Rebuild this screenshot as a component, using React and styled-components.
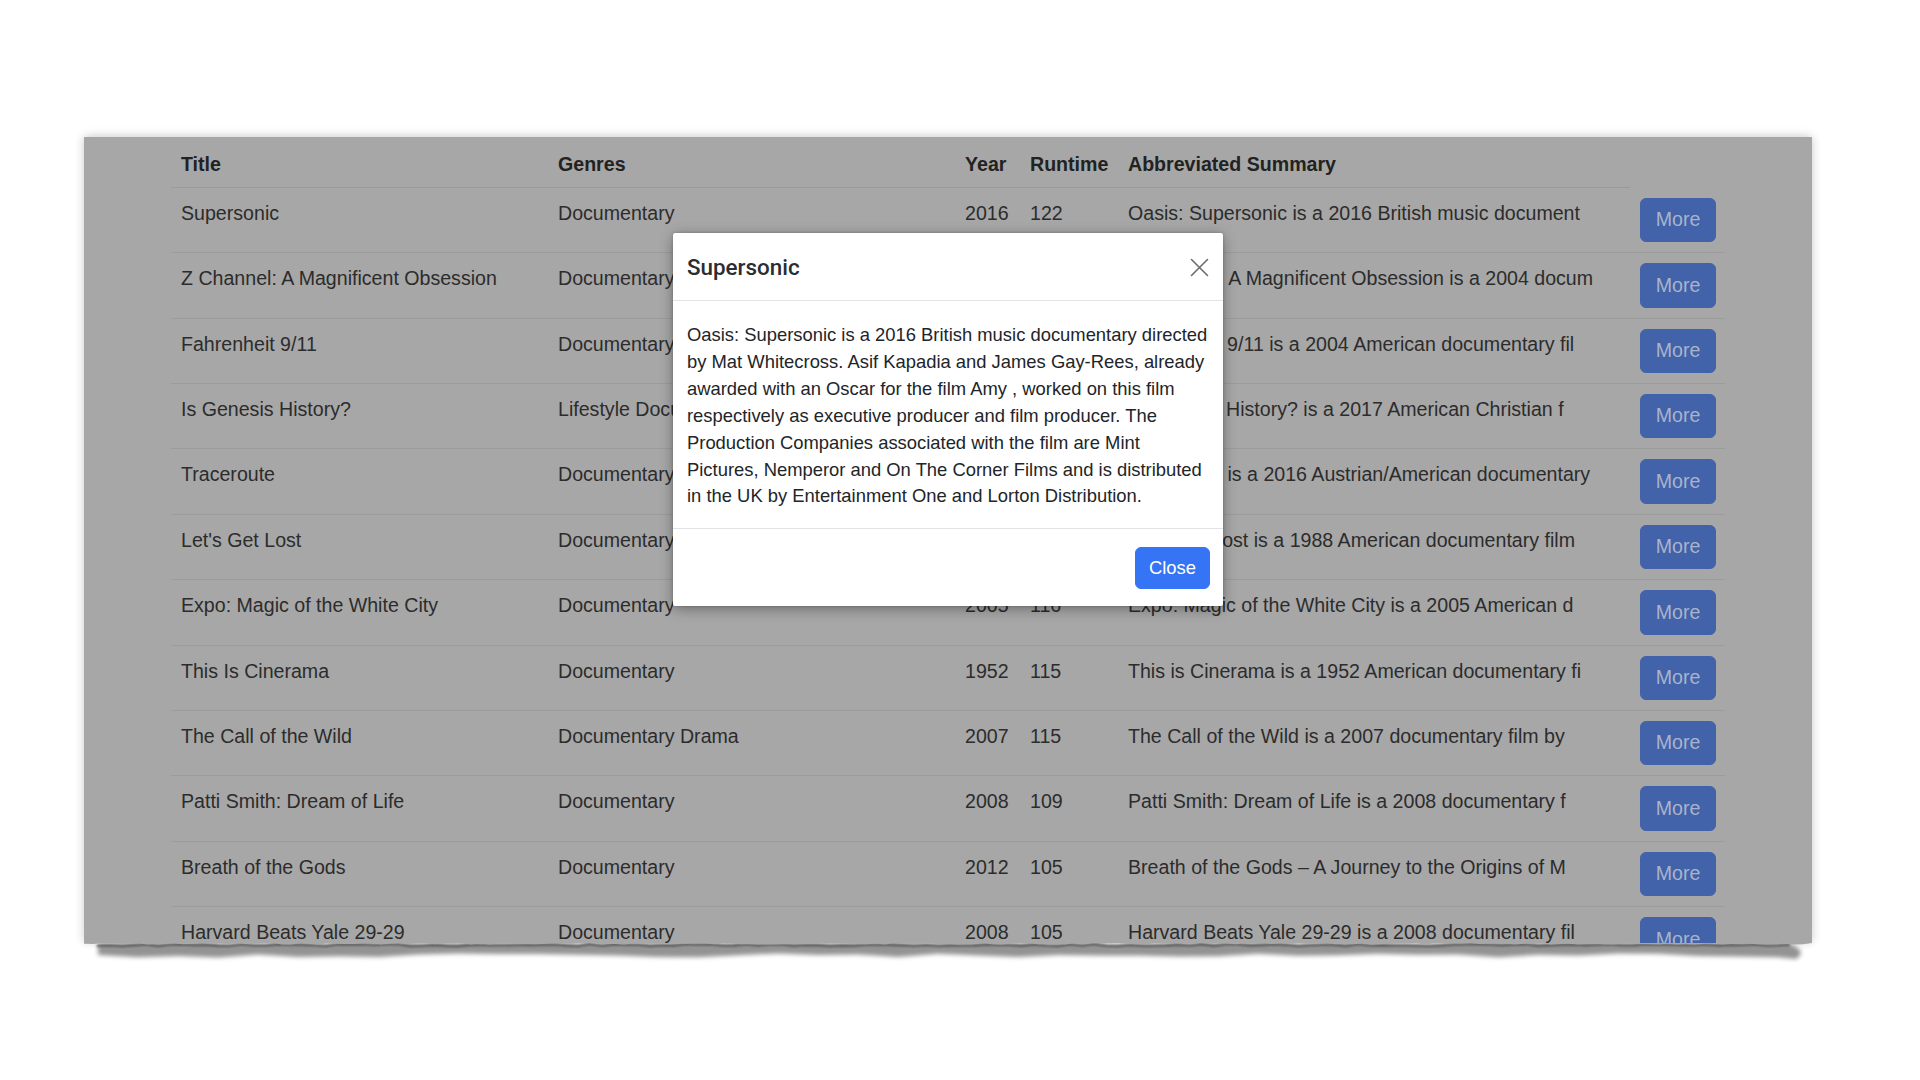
import React from "react";
import styled, { createGlobalStyle } from "styled-components";

const GlobalStyle = createGlobalStyle`
  html, body { margin: 0; padding: 0; background: #ffffff; }
  body { font-family: "Liberation Sans", Arial, Helvetica, sans-serif; }
  * { box-sizing: border-box; }
`;

const Page = styled.div`
  width: 1920px;
  height: 1080px;
  overflow: hidden;
  padding: 137px 0 0 84px;
  background: #ffffff;
`;

const Frame = styled.div`
  position: relative;
  width: 1728px;
`;

const Sheet = styled.div`
  height: 806px;
  background: #a7a7a7;
  overflow: hidden;
  padding: 1px 87px 0 87px;
  box-shadow: 0 -2px 10px rgba(0, 0, 0, 0.10), -3px 0 8px rgba(0, 0, 0, 0.06), 3px 0 8px rgba(0, 0, 0, 0.06);
`;

const Table = styled.table`
  width: 1554px;
  border-collapse: collapse;
  table-layout: fixed;
  font-size: 19.6px;
  line-height: 29.4px;
  color: #2c2c2c;
`;

const HeadCell = styled.th`
  text-align: left;
  font-weight: 700;
  color: #222222;
  padding: 12px 10px 8px 10px;
  border-bottom: 1px solid #9a9a9a;
  white-space: nowrap;
`;

const Row = styled.tr`
  border-bottom: 1px solid #9c9c9c;
`;

const Cell = styled.td`
  padding: ${(p) => (p.$action ? "10px" : "11px 10px 9px 10px")};
  vertical-align: top;
  white-space: nowrap;
  overflow: ${(p) => (p.$clip ? "hidden" : "visible")};
`;

const MoreButton = styled.button`
  display: block;
  height: 44.4px;
  width: 76px;
  padding: 0;
  border: 1px solid #4262a9;
  border-radius: 6px;
  background: #4262a9;
  color: #a9b3cb;
  font-family: inherit;
  font-size: 19.6px;
  line-height: 1;
  cursor: pointer;
`;

const TornEdge = styled.svg`
  display: block;
  width: 1728px;
  height: 24px;
`;

const Modal = styled.div`
  position: absolute;
  left: 589px;
  top: 96px;
  width: 550px;
  background: #ffffff;
  border-radius: 2px;
  box-shadow: 0 3px 14px rgba(0, 0, 0, 0.35), 0 0 3px rgba(0, 0, 0, 0.2);
  color: #212529;
  z-index: 10;
`;

const ModalHeader = styled.div`
  height: 68px;
  display: flex;
  align-items: center;
  justify-content: space-between;
  padding: 1px 12px 0 14px;
  border-bottom: 1px solid #e2e3e5;
`;

const ModalTitle = styled.h5`
  margin: 0;
  font-family: Roboto, "Liberation Sans", Arial, sans-serif;
  font-weight: 500;
  font-size: 22.4px;
  line-height: 1.2;
  color: #2a2d31;
`;

const CloseX = styled.button`
  width: 24px;
  height: 24px;
  padding: 0;
  border: 0;
  background: transparent;
  display: flex;
  align-items: center;
  justify-content: center;
  cursor: pointer;
`;

const ModalBody = styled.div`
  padding: 21px 14px 18px 14px;
  font-size: 18.4px;
  line-height: 26.9px;
  border-bottom: 1px solid #e2e3e5;
`;

const ModalFooter = styled.div`
  height: 77px;
  display: flex;
  align-items: center;
  justify-content: flex-end;
  padding: 1px 13px 0 13px;
`;

const CloseButton = styled.button`
  height: 42px;
  width: 75px;
  padding: 0;
  border: 1px solid #3474f5;
  border-radius: 6px;
  background: #3474f5;
  color: #ffffff;
  font-family: inherit;
  font-size: 18.4px;
  line-height: 1;
  cursor: pointer;
`;

const rows = [
  ["Supersonic", "Documentary", "2016", "122", "Oasis: Supersonic is a 2016 British music document"],
  ["Z Channel: A Magnificent Obsession", "Documentary", "2004", "120", "Z Channel: A Magnificent Obsession is a 2004 docum"],
  ["Fahrenheit 9/11", "Documentary", "2004", "122", "Fahrenheit 9/11 is a 2004 American documentary fil"],
  ["Is Genesis History?", "Lifestyle Documentary", "2017", "101", "Is Genesis History? is a 2017 American Christian f"],
  ["Traceroute", "Documentary", "2016", "120", "Traceroute is a 2016 Austrian/American documentary"],
  ["Let's Get Lost", "Documentary", "1988", "120", "Let's Get Lost is a 1988 American documentary film"],
  ["Expo: Magic of the White City", "Documentary", "2005", "116", "Expo: Magic of the White City is a 2005 American d"],
  ["This Is Cinerama", "Documentary", "1952", "115", "This is Cinerama is a 1952 American documentary fi"],
  ["The Call of the Wild", "Documentary Drama", "2007", "115", "The Call of the Wild is a 2007 documentary film by"],
  ["Patti Smith: Dream of Life", "Documentary", "2008", "109", "Patti Smith: Dream of Life is a 2008 documentary f"],
  ["Breath of the Gods", "Documentary", "2012", "105", "Breath of the Gods \u2013 A Journey to the Origins of M"],
  ["Harvard Beats Yale 29-29", "Documentary", "2008", "105", "Harvard Beats Yale 29-29 is a 2008 documentary fil"],
];

function jagged(y0, amp, seed, from, to, step) {
  const pts = [];
  let s = seed;
  for (let x = from; x <= to; x += step) {
    s = (s * 9301 + 49297) % 233280;
    const r = s / 233280;
    pts.push([x, y0 + (r - 0.5) * amp]);
  }
  return pts;
}

function Torn() {
  const top = jagged(0.8, 1.6, 7, 0, 1728, 9);
  const edge = "M0,0 L1728,0 " + top.slice().reverse().map((p) => `L${p[0]},${p[1].toFixed(2)}`).join(" ") + " Z";
  const band = jagged(1.5, 2, 13, 14, 1714, 12);
  const bottom = jagged(12.5, 4, 29, 14, 1714, 40);
  const shadow =
    `M${band[0][0]},${band[0][1]} ` +
    band.map((p) => `L${p[0]},${p[1].toFixed(2)}`).join(" ") +
    ` Q1724,8 1712,16 ` +
    bottom.slice().reverse().map((p) => `L${p[0]},${p[1].toFixed(2)}`).join(" ") +
    " Z";
  const line = "M14,2 " + band.map((p) => `L${p[0]},${(p[1] + 0.8).toFixed(2)}`).join(" ");
  return (
    <TornEdge viewBox="0 0 1728 24">
      <defs>
        <filter id="blurA" x="-5%" y="-100%" width="110%" height="300%">
          <feGaussianBlur stdDeviation="2" />
        </filter>
        <filter id="blurB" x="-5%" y="-100%" width="110%" height="300%">
          <feGaussianBlur stdDeviation="0.8" />
        </filter>
      </defs>
      <path d={shadow} fill="#6f6f6f" opacity="0.75" filter="url(#blurA)" />
      <path d={line} stroke="#4a4a4a" strokeWidth="2.6" fill="none" opacity="0.85" filter="url(#blurB)" />
      <path d={edge} fill="#a7a7a7" />
    </TornEdge>
  );
}

export default function App() {
  return (
    <>
      <GlobalStyle />
      <Page>
        <Frame>
          <Sheet>
            <Table>
              <colgroup>
                <col style={{ width: 377 }} />
                <col style={{ width: 407 }} />
                <col style={{ width: 65 }} />
                <col style={{ width: 98 }} />
                <col style={{ width: 512 }} />
                <col style={{ width: 95 }} />
              </colgroup>
              <thead>
                <tr>
                  <HeadCell>Title</HeadCell>
                  <HeadCell>Genres</HeadCell>
                  <HeadCell>Year</HeadCell>
                  <HeadCell>Runtime</HeadCell>
                  <HeadCell>Abbreviated Summary</HeadCell>
                </tr>
              </thead>
              <tbody>
                {rows.map((r) => (
                  <Row key={r[0]}>
                    <Cell>{r[0]}</Cell>
                    <Cell>{r[1]}</Cell>
                    <Cell>{r[2]}</Cell>
                    <Cell>{r[3]}</Cell>
                    <Cell $clip>{r[4]}</Cell>
                    <Cell $action>
                      <MoreButton>More</MoreButton>
                    </Cell>
                  </Row>
                ))}
              </tbody>
            </Table>
          </Sheet>
          <Torn />
          <Modal>
            <ModalHeader>
              <ModalTitle>Supersonic</ModalTitle>
              <CloseX aria-label="Close">
                <svg width="19" height="19" viewBox="0 0 19 19">
                  <path d="M1.5 1.5 L17.5 17.5 M17.5 1.5 L1.5 17.5" stroke="#6b6b6b" strokeWidth="1.6" strokeLinecap="round" />
                </svg>
              </CloseX>
            </ModalHeader>
            <ModalBody>
              Oasis: Supersonic is a 2016 British music documentary directed by Mat Whitecross. Asif Kapadia and
              James Gay-Rees, already awarded with an Oscar for the film Amy , worked on this film respectively as
              executive producer and film producer. The Production Companies associated with the film are Mint
              Pictures, Nemperor and On The Corner Films and is distributed in the UK by Entertainment One and Lorton
              Distribution.
            </ModalBody>
            <ModalFooter>
              <CloseButton>Close</CloseButton>
            </ModalFooter>
          </Modal>
        </Frame>
      </Page>
    </>
  );
}
